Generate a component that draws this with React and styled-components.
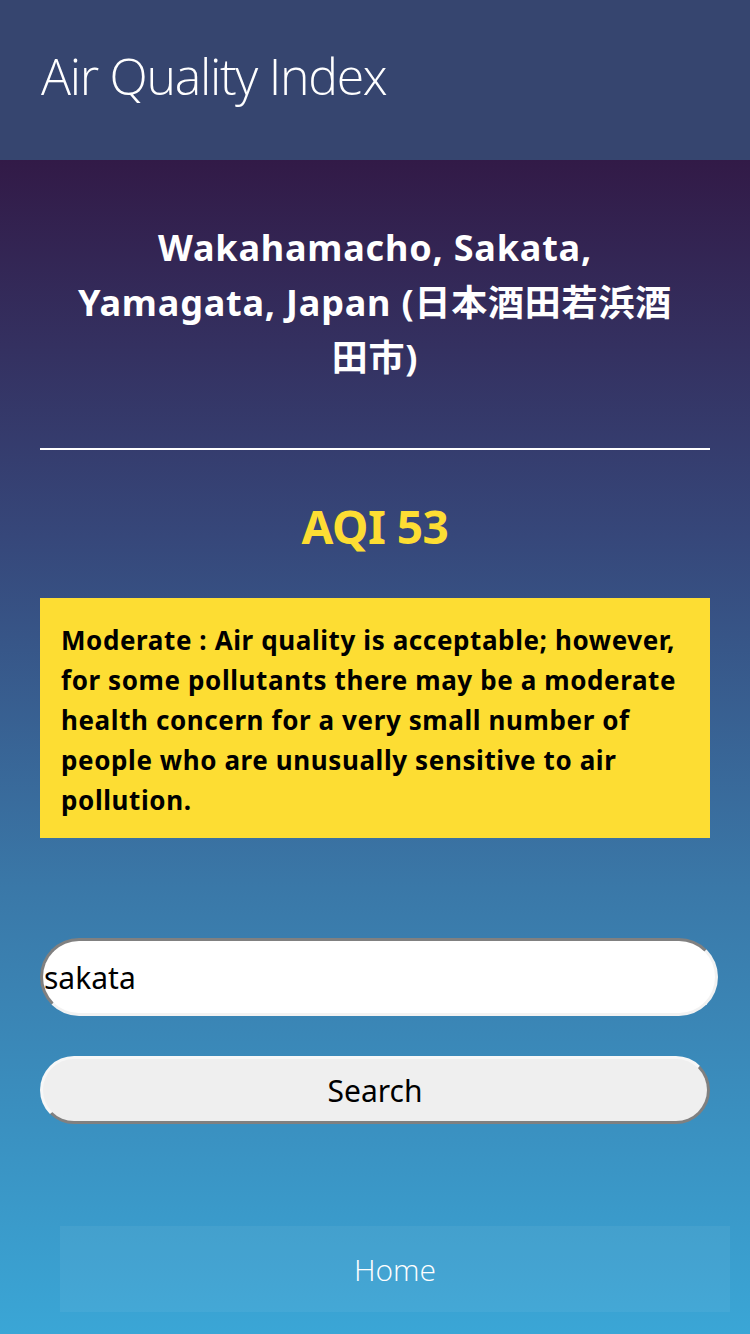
import React from "react";
import styled, { createGlobalStyle } from "styled-components";

const Global = createGlobalStyle`
  html, body { margin: 0; padding: 0; }
  body {
    font-family: "Noto Sans", "Open Sans", "Noto Sans CJK JP", sans-serif;
    background: #3aa6d6;
  }
  * { box-sizing: border-box; }
`;

const Page = styled.div`
  width: 750px;
  min-height: 1334px;
  display: flex;
  flex-direction: column;
`;

const Header = styled.header`
  height: 160px;
  background: #36456f;
  display: flex;
  align-items: center;
  padding: 0 0 8px 41px;
`;

const Title = styled.h1`
  margin: 0;
  font-family: "Open Sans", "Noto Sans", sans-serif;
  font-weight: 300;
  font-size: 50px;
  color: #ffffff;
  letter-spacing: -1.3px;
`;

const Main = styled.main`
  flex: 1;
  background: linear-gradient(180deg, #321a47 0%, #36477a 32%, #3a78a8 62%, #3aa6d6 100%);
  padding: 0 40px 22px;
  display: flex;
  flex-direction: column;
`;

const Location = styled.h2`
  margin: 60px 0 0;
  padding: 0 30px;
  text-align: center;
  font-weight: 700;
  font-size: 36px;
  line-height: 55px;
  color: #ffffff;
  font-family: "Noto Sans", "Noto Sans CJK JP", sans-serif;
  letter-spacing: 0.8px;
`;

const Rule = styled.hr`
  margin: 63px 0 0;
  border: none;
  height: 2px;
  background: #ffffff;
`;

const Aqi = styled.div`
  margin-top: 46px;
  text-align: center;
  font-weight: 700;
  font-size: 46px;
  line-height: 60px;
  color: #fddd33;
  letter-spacing: -0.5px;
`;

const Notice = styled.div`
  margin-top: 42px;
  background: #fddd33;
  color: #000;
  padding: 22px 21px 18px;
  font-weight: 700;
  font-size: 26px;
  line-height: 40px;
  letter-spacing: 0.6px;
`;

const Form = styled.form`
  margin-top: 100px;
  display: flex;
  flex-direction: column;
  gap: 40px;
`;

const Input = styled.input`
  width: 678px;
  height: 78px;
  border-radius: 40px;
  border: 3px solid #f2f2f2;
  border-top-color: #808080;
  border-left-color: #808080;
  background: #fff;
  padding: 0 1px;
  font-family: "Noto Sans", sans-serif;
  font-size: 30px;
  color: #000;
  outline: none;
`;

const Button = styled.button`
  width: 670px;
  height: 68px;
  border-radius: 36px;
  border: 3px solid #f7f7f7;
  border-right-color: #808080;
  border-bottom-color: #808080;
  background: #efefef;
  font-family: "Noto Sans", sans-serif;
  font-size: 30px;
  color: #000;
  padding: 0;
`;

const Nav = styled.nav`
  margin-top: 102px;
  margin-left: 20px;
  width: 670px;
  height: 86px;
  background: rgba(255, 255, 255, 0.05);
  display: flex;
  align-items: center;
  justify-content: center;
`;

const NavLink = styled.a`
  font-family: "Open Sans", "Noto Sans", sans-serif;
  font-weight: 300;
  font-size: 30px;
  color: #ffffff;
  text-decoration: none;
`;

export default function App() {
  return (
    <Page>
      <Global />
      <Header>
        <Title>Air Quality Index</Title>
      </Header>
      <Main>
        <Location>
          Wakahamacho, Sakata,
          <br />
          Yamagata, Japan (日本酒田若浜酒田市)
        </Location>
        <Rule />
        <Aqi>AQI 53</Aqi>
        <Notice>
          Moderate : Air quality is acceptable; however, for some pollutants there may be a
          moderate health concern for a very small number of people who are unusually sensitive
          to air pollution.
        </Notice>
        <Form onSubmit={(e) => e.preventDefault()}>
          <Input defaultValue="sakata" />
          <Button type="submit">Search</Button>
        </Form>
        <Nav>
          <NavLink href="#">Home</NavLink>
        </Nav>
      </Main>
    </Page>
  );
}
